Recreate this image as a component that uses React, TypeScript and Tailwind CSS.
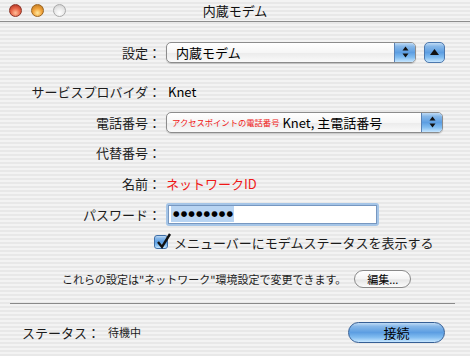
import type { ReactNode } from 'react';

const stripes =
  'bg-[repeating-linear-gradient(180deg,#f3f3f3_0px,#f3f3f3_2px,#e8e8e8_2px,#e8e8e8_4px)]';
const aqua =
  'bg-[linear-gradient(180deg,#c0dbf5_0%,#86b7e8_18%,#5c9ee2_50%,#80bcf0_75%,#c6e6ff_100%)]';

function Arrows() {
  return (
    <svg width="7" height="12" viewBox="0 0 7 12">
      <polygon points="3.5,0.5 6.5,4.5 0.5,4.5" fill="#111" />
      <polygon points="0.5,7.5 6.5,7.5 3.5,11.5" fill="#111" />
    </svg>
  );
}

function Popup({ width, children }: { width: string; children: ReactNode }) {
  return (
    <div
      className={`${width} flex items-stretch h-[21px] rounded-[5px] border border-[#8c8c8c] overflow-hidden shadow-[0_1px_1px_rgba(0,0,0,0.18)] bg-[linear-gradient(180deg,#ffffff_0%,#f6f6f6_50%,#ebebeb_52%,#fafafa_100%)]`}
    >
      <div className="flex-1 flex items-center leading-none">{children}</div>
      <div className={`w-[21px] flex items-center justify-center border-l border-[#5a82b4] ${aqua}`}>
        <Arrows />
      </div>
    </div>
  );
}

function Row({
  label,
  className,
  children,
}: {
  label: string;
  className: string;
  children?: ReactNode;
}) {
  return (
    <div className={`flex items-center ${className}`}>
      <div className="w-[161px] text-right leading-none text-[#1c1c1c]">{label}</div>
      <div className="ml-[5px] flex items-center">{children}</div>
    </div>
  );
}

function Light({ tone }: { tone: 'red' | 'yellow' | 'gray' }) {
  const styles = {
    red: 'border-[#8c3426] bg-[radial-gradient(circle_at_50%_72%,#ffc09a_0%,#ea6a4c_45%,#a5271a_100%)]',
    yellow:
      'border-[#9a6420] bg-[radial-gradient(circle_at_50%_72%,#ffeaa0_0%,#f2a43c_45%,#b4701a_100%)]',
    gray: 'border-[#a9a9a9] bg-[radial-gradient(circle_at_50%_72%,#ffffff_0%,#e9e9e9_50%,#c8c8c8_100%)]',
  };
  return <div className={`w-[13px] h-[13px] rounded-full border ${styles[tone]}`} />;
}

export default function App() {
  return (
    <div
      className={`w-[470px] h-[356px] overflow-hidden ${stripes} font-['Noto_Sans_CJK_JP',sans-serif] text-[13px] text-black`}
    >
      {/* title bar */}
      <div className="h-[22px] grid grid-cols-[1fr_auto_1fr] items-center border-b border-[#8d8d8d]">
        <div className="flex items-center gap-[9px] pl-[9px]">
          <Light tone="red" />
          <Light tone="yellow" />
          <Light tone="gray" />
        </div>
        <div className="leading-none text-[#111]">内蔵モデム</div>
        <div />
      </div>

      <Row label="設定：" className="mt-[19px] h-[22px]">
        <Popup width="w-[250px]">
          <span className="pl-[9px]">内蔵モデム</span>
        </Popup>
        <button
          className={`ml-[8px] w-[21px] h-[21px] rounded-[5px] border border-[#4d78ad] flex items-center justify-center ${aqua}`}
        >
          <svg width="9" height="6" viewBox="0 0 9 6">
            <polygon points="4.5,0 9,6 0,6" fill="#111" />
          </svg>
        </button>
      </Row>

      <Row label="サービスプロバイダ：" className="mt-[17px] h-[22px]">
        <span className="ml-[2px] leading-none">Knet</span>
      </Row>

      <Row label="電話番号：" className="mt-[9px] h-[22px]">
        <Popup width="w-[277px]">
          <span className="pl-[5px] text-[8.3px] text-[#f01818]">アクセスポイントの電話番号</span>
          <span className="pl-[3px]">Knet, 主電話番号</span>
        </Popup>
      </Row>

      <Row label="代替番号：" className="mt-[8px] h-[22px]" />

      <Row label="名前：" className="mt-[9px] h-[22px]">
        <span className="leading-none text-[#f01818]">ネットワークID</span>
      </Row>

      <Row label="パスワード：" className="mt-[8px] h-[24px]">
        <div className="w-[213px] h-[23px] rounded-[3px] bg-[#a5c5e7] p-[2px]">
          <div className="h-full bg-white border border-[#7797c0] flex items-center px-[2px]">
            <span className="h-[16px] pl-[2px] bg-[#b8d4f2] flex items-center font-['DejaVu_Sans',sans-serif] text-[7.5px] tracking-[1.1px] leading-none">
              ●●●●●●●●
            </span>
          </div>
        </div>
      </Row>

      <div className="mt-[5px] h-[22px] flex items-center pl-[154px]">
        <div
          className={`relative w-[14px] h-[14px] rounded-[3px] border border-[#3f6ea6] ${aqua}`}
        >
          <svg
            className="absolute left-0 top-[-3px] overflow-visible"
            width="16"
            height="16"
            viewBox="0 0 16 16"
          >
            <polyline
              points="3,9 7,14 15,1"
              fill="none"
              stroke="#111"
              strokeWidth="2.4"
              strokeLinejoin="miter"
            />
          </svg>
        </div>
        <span className="ml-[6px] leading-none text-[#1c1c1c]">
          メニューバーにモデムステータスを表示する
        </span>
      </div>

      <div className="mt-[15px] h-[22px] flex items-center pl-[62px]">
        <span className="text-[11px] leading-none text-[#1c1c1c]">
          これらの設定は"ネットワーク"環境設定で変更できます。
        </span>
        <button className="ml-[8px] w-[57px] h-[18px] rounded-full border border-[#8a8a8a] bg-[linear-gradient(180deg,#ffffff_0%,#f4f4f4_50%,#e6e6e6_55%,#fbfbfb_100%)] text-[11px] leading-none flex items-center justify-center">
          編集...
        </button>
      </div>

      <div className="mt-[13px] ml-[10px] w-[445px] h-px bg-[#8a8a8a]" />

      <div className="mt-[17px] h-[22px] flex items-center pl-[22px] pr-[25px]">
        <span className="leading-none text-[#1c1c1c]">ステータス：</span>
        <span className="ml-[8px] text-[11px] leading-none text-[#1c1c1c]">待機中</span>
        <button
          className={`ml-auto w-[97px] h-[21px] rounded-full border border-[#365f95] ${aqua} flex items-center justify-center leading-none`}
        >
          接続
        </button>
      </div>
    </div>
  );
}
